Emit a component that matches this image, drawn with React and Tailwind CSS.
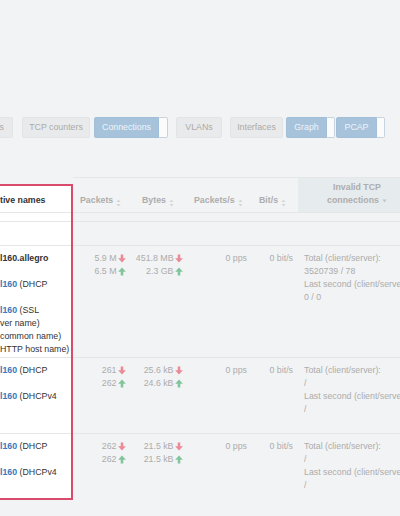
import React from 'react';

const LINE = 'border-[#e4e6e8]';

function SortIcon() {
  return (
    <svg width="5" height="8" viewBox="0 0 5 8" className="ml-[3px] inline-block">
      <path d="M2.5 0.5L4.5 3H0.5z" fill="#d3d5d7" />
      <path d="M2.5 7.5L4.5 5H0.5z" fill="#d3d5d7" />
    </svg>
  );
}

function Arrow({ dir }) {
  if (dir === 'down') {
    return (
      <svg width="8" height="9" viewBox="0 0 10 10" className="ml-[1.5px]">
        <path d="M3.4 0h3.2v4.8h3.2L5 10 0.2 4.8h3.2z" fill="#ec8a96" />
      </svg>
    );
  }
  return (
    <svg width="8" height="9" viewBox="0 0 10 10" className="ml-[1.5px]">
      <path d="M5 0l4.8 5.2H6.6V10H3.4V5.2H0.2z" fill="#82c59c" />
    </svg>
  );
}

function GrayBtn({ w, ml, children }) {
  return (
    <div
      className={`h-[21px] shrink-0 flex items-center justify-center bg-[#e9eaeb] border border-[#e3e4e5] rounded-[2px] text-[#aaaaaa] whitespace-nowrap ${w} ${ml}`}
    >
      {children}
    </div>
  );
}

function BlueBtn({ w, tw, ml, children }) {
  return (
    <div className={`flex shrink-0 h-[21px] ${ml}`}>
      <div
        className={`h-full flex items-center justify-center bg-[#a7c3dc] border border-[#a3bfd7] rounded-l-[2px] text-[#eef3f8] ${w}`}
      >
        {children}
      </div>
      <div className={`h-full bg-[#fbfbfb] border border-l-0 border-[#c6d3de] rounded-r-[2px] ${tw}`} />
    </div>
  );
}

const rows = [
  {
    h: 'h-[112px]',
    bh: 'h-[112px]',
    names: [
      [{ t: 'l160.allegro', bold: true }],
      [],
      [{ t: 'l160', link: true }, { t: ' (DHCP' }],
      [],
      [{ t: 'l160', link: true }, { t: ' (SSL' }],
      [{ t: 'ver name)' }],
      [{ t: 'common name)' }],
      [{ t: 'HTTP host name)' }],
    ],
    pk: ['5.9 M', '6.5 M'],
    by: ['451.8 MB', '2.3 GB'],
    total: '3520739 / 78',
    last: '0 / 0',
  },
  {
    h: 'h-[76px]',
    bh: 'h-[76px]',
    names: [
      [{ t: 'l160', link: true }, { t: ' (DHCP' }],
      [],
      [{ t: 'l160', link: true }, { t: ' (DHCPv4' }],
    ],
    pk: ['261', '262'],
    by: ['25.6 kB', '24.6 kB'],
    total: '/',
    last: '/',
  },
  {
    h: 'h-[82px]',
    bh: 'h-[64px]',
    names: [
      [{ t: 'l160', link: true }, { t: ' (DHCP' }],
      [],
      [{ t: 'l160', link: true }, { t: ' (DHCPv4' }],
    ],
    pk: ['262', '262'],
    by: ['21.5 kB', '21.5 kB'],
    total: '/',
    last: '/',
  },
];

function NameCell({ row, last }) {
  return (
    <div className={`${row.bh} pt-[6px] leading-[13px] whitespace-nowrap overflow-hidden ${last ? '' : 'border-b border-[#e6e6e6]'}`}>
      {row.names.map((line, i) => (
        <div key={i} className="h-[13px]">
          {line.map((s, j) => (
            <span
              key={j}
              className={s.link ? 'text-[#3a78b8] font-bold' : s.bold ? 'text-[#333333] font-bold' : 'text-[#333333]'}
            >
              {s.t}
            </span>
          ))}
        </div>
      ))}
    </div>
  );
}

function DataRow({ row, last }) {
  return (
    <div className={`flex ${row.h} ${last ? '' : `border-b ${LINE}`} text-[#acacac] leading-[13px] pt-[6px]`}>
      <div className="w-[62px] shrink-0 flex flex-col items-end pr-[9px]">
        <div className="flex items-center h-[13px]">{row.pk[0]}<Arrow dir="down" /></div>
        <div className="flex items-center h-[13px]">{row.pk[1]}<Arrow dir="up" /></div>
      </div>
      <div className="w-[52px] shrink-0 flex flex-col items-end pr-[4px] whitespace-nowrap">
        <div className="flex items-center h-[13px]">{row.by[0]}<Arrow dir="down" /></div>
        <div className="flex items-center h-[13px]">{row.by[1]}<Arrow dir="up" /></div>
      </div>
      <div className="w-[65px] shrink-0 text-right pr-[5px]">0 pps</div>
      <div className="w-[46px] shrink-0 text-right pr-[5px] whitespace-nowrap">0 bit/s</div>
      <div className="w-[118px] shrink-0 pl-[6px] whitespace-nowrap">
        <div>Total (client/server):</div>
        <div>{row.total}</div>
        <div>Last second (client/server):</div>
        <div>{row.last}</div>
      </div>
    </div>
  );
}

export default function App() {
  return (
    <div className="w-[400px] h-[516px] overflow-hidden bg-[#f2f3f4] font-['Liberation_Sans',Arial,sans-serif] text-[8.8px]">
      <div className="flex items-start pt-[117px] h-[138px]">
        <div className="w-[13px] shrink-0 h-[21px] flex items-center justify-end pr-[8px] bg-[#e9eaeb] border border-l-0 border-[#e3e4e5] rounded-r-[2px] text-[#aaaaaa]">
          s
        </div>
        <GrayBtn w="w-[68px]" ml="ml-[9px]">TCP counters</GrayBtn>
        <BlueBtn w="w-[65px]" tw="w-[9px]" ml="ml-[4px]">Connections</BlueBtn>
        <GrayBtn w="w-[46px]" ml="ml-[8px]">VLANs</GrayBtn>
        <GrayBtn w="w-[53px]" ml="ml-[8px]">Interfaces</GrayBtn>
        <BlueBtn w="w-[41px]" tw="w-[8px]" ml="ml-[3px]">Graph</BlueBtn>
        <BlueBtn w="w-[41px]" tw="w-[8px]" ml="ml-[1px]">PCAP</BlueBtn>
      </div>

      <div className="flex mt-[39px]">
        <div className="w-[73px] shrink-0 pt-[7px]">
          <div className="border-t-2 border-r-2 border-b-2 border-[#d94a6c] bg-white">
            <div className="h-[27px] border-b border-[#e6e6e6] flex items-end pb-[5px] font-bold text-[#333333] whitespace-nowrap leading-[13px]">
              tive names
            </div>
            <div className="h-[9px] border-b border-[#e6e6e6]" />
            <div className="h-[24px] border-b border-[#e6e6e6]" />
            {rows.map((r, i) => (
              <NameCell key={i} row={r} last={i === rows.length - 1} />
            ))}
          </div>
        </div>

        <div className="w-[343px] shrink-0">
          <div className={`flex h-[36px] border-t border-b ${LINE} font-bold text-[#adadad] leading-[13px]`}>
            <div className="w-[62px] shrink-0 flex items-end pb-[5px] pl-[7px]">Packets<SortIcon /></div>
            <div className="w-[52px] shrink-0 flex items-end pb-[5px] pl-[7px]">Bytes<SortIcon /></div>
            <div className="w-[65px] shrink-0 flex items-end pb-[5px] pl-[7px]">Packets/s<SortIcon /></div>
            <div className="w-[46px] shrink-0 flex items-end pb-[5px] pl-[7px]">Bit/s<SortIcon /></div>
            <div className="w-[118px] shrink-0 bg-[#e6ebee] flex flex-col items-center justify-end pb-[5px]">
              <div>Invalid TCP</div>
              <div className="flex items-center">
                connections
                <svg width="5" height="4" viewBox="0 0 5 4" className="ml-[3px]">
                  <path d="M0.5 0.5h4L2.5 3.5z" fill="#c2c4c6" />
                </svg>
              </div>
            </div>
          </div>
          <div className={`h-[9px] border-b ${LINE}`} />
          <div className={`h-[24px] border-b ${LINE}`} />
          {rows.map((r, i) => (
            <DataRow key={i} row={r} last={i === rows.length - 1} />
          ))}
        </div>
      </div>
    </div>
  );
}
